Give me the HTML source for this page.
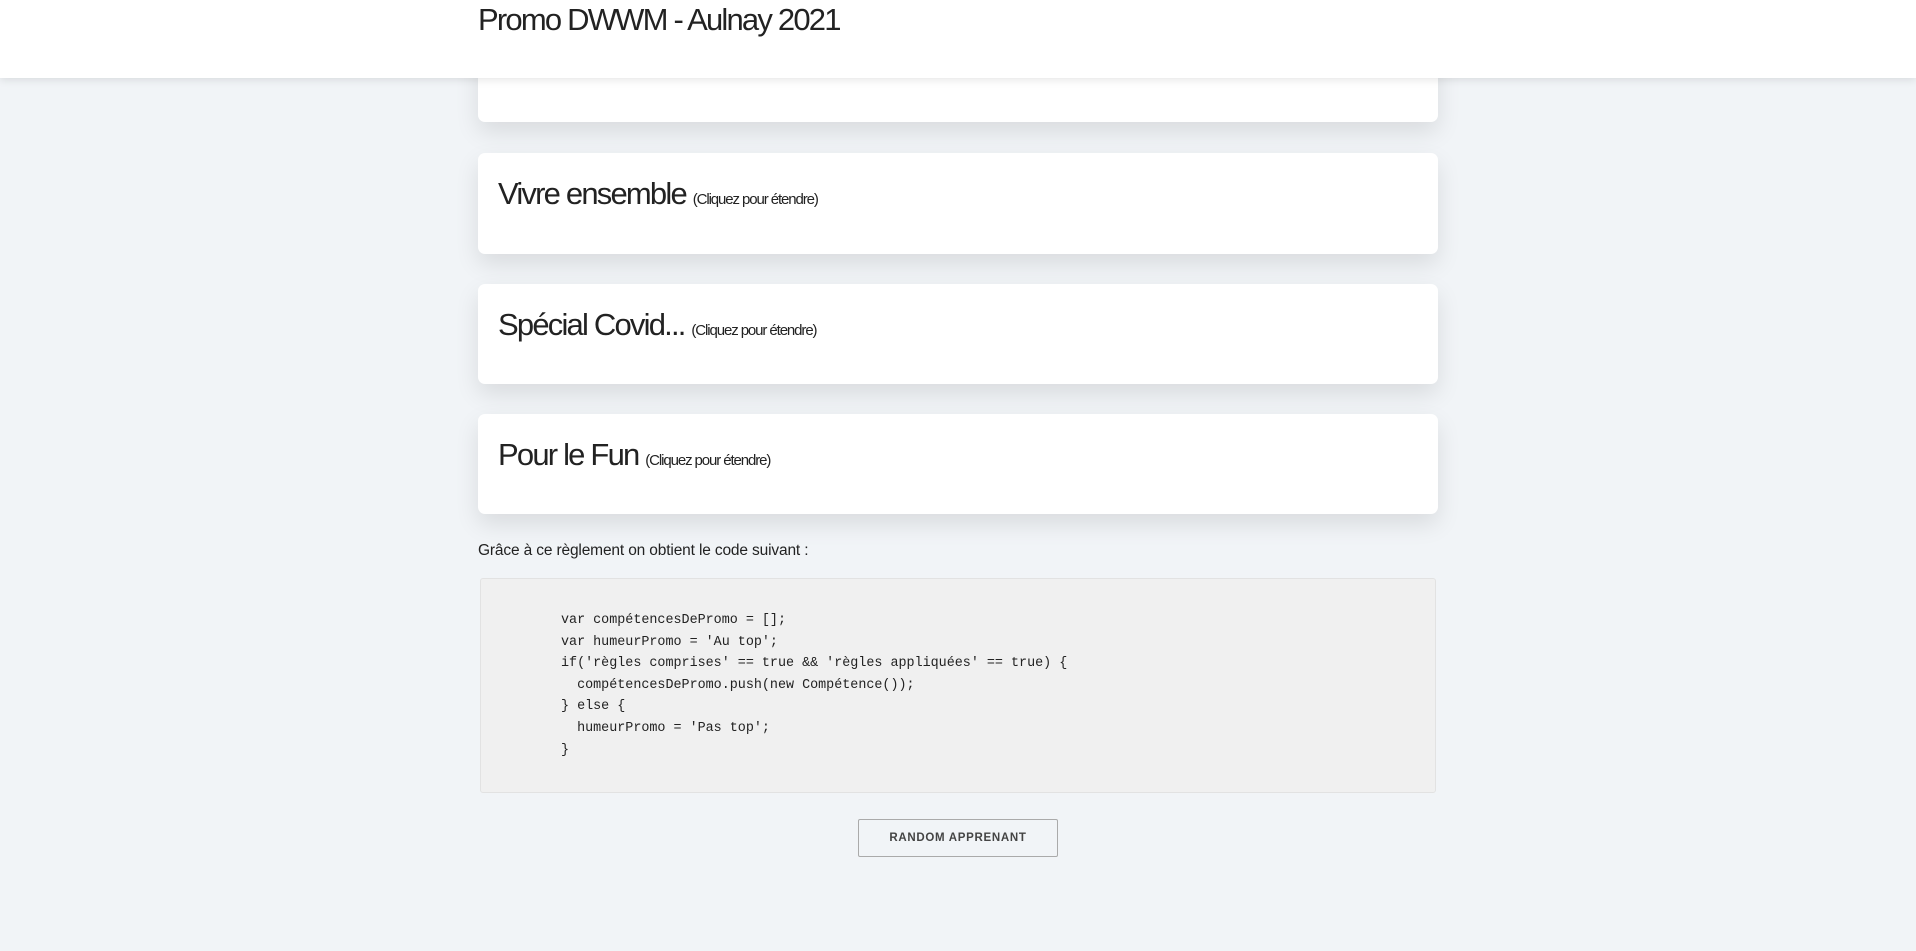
<!DOCTYPE html>
<html><head><meta charset="utf-8"><style>
body{margin:0;width:1916px;height:951px;overflow:hidden;background:#f1f4f7;font-family:"Liberation Sans",sans-serif;color:#222;position:relative}
.hdr{position:absolute;left:0;top:0;width:1916px;height:78px;background:#fff;box-shadow:0 2px 8px rgba(0,0,0,.1);z-index:2}
.hdr h1{position:absolute;left:478px;top:0;margin:0;font-weight:normal;font-size:31px;letter-spacing:-1.8px;line-height:40px}
.card{position:absolute;left:478px;width:960px;background:#fff;border-radius:7px;box-shadow:0 10px 24px rgba(0,0,0,.1)}
.card .t{position:absolute;left:20px;font-size:31px;letter-spacing:-1.8px;line-height:40px}
.card .t small{font-size:15px;letter-spacing:-1.1px}
.p{position:absolute;left:478px;top:542px;font-size:15.5px;letter-spacing:-.15px}
.code{position:absolute;left:480px;top:578px;width:954px;height:213px;background:#f0f0f0;border:1px solid #e2e2e2;border-radius:3px}
.code pre{margin:0;position:absolute;left:80px;top:31px;font-family:"Liberation Mono",monospace;font-size:13.4px;line-height:21.6px;color:#222}
.btn{position:absolute;left:858px;top:819px;width:200px;height:38px;border:1px solid #aaa;border-radius:2px;box-sizing:border-box;font-size:11.5px;font-weight:bold;letter-spacing:.7px;text-align:center;line-height:37px;color:#444}
</style></head><body>
<div class="hdr"><h1>Promo DWWM - Aulnay 2021</h1></div>
<div class="card" style="top:40px;height:82px"></div>
<div class="card" style="top:153px;height:101px"><div class="t" style="top:21px">Vivre ensemble <small>(Cliquez pour étendre)</small></div></div>
<div class="card" style="top:284px;height:100px"><div class="t" style="top:21px">Spécial Covid... <small>(Cliquez pour étendre)</small></div></div>
<div class="card" style="top:414px;height:100px"><div class="t" style="top:21px">Pour le Fun <small>(Cliquez pour étendre)</small></div></div>
<div class="p">Grâce à ce règlement on obtient le code suivant :</div>
<div class="code"><pre>var compétencesDePromo = [];
var humeurPromo = 'Au top';
if('règles comprises' == true &amp;&amp; 'règles appliquées' == true) {
  compétencesDePromo.push(new Compétence());
} else {
  humeurPromo = 'Pas top';
}</pre></div>
<div class="btn">RANDOM APPRENANT</div>
</body></html>
